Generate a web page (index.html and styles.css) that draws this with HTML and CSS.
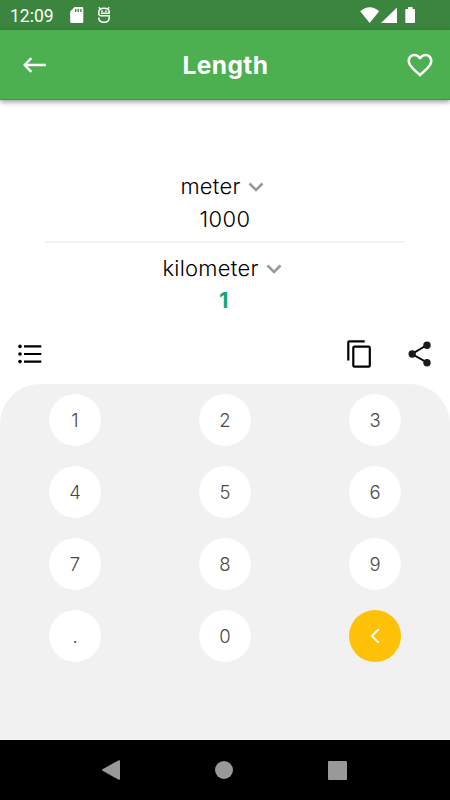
FILE: index.html
```html
<!DOCTYPE html>
<html lang="en">
<head>
<meta charset="utf-8">
<title>Length</title>
<link rel="stylesheet" href="styles.css">
</head>
<body>
<div class="status">
  <span class="time">12:09</span>
  <svg class="sd" width="14" height="16" viewBox="0 0 14 16"><path fill="#fff" fill-rule="evenodd" d="M4.500 0H12Q13.300 0 13.300 1.300V14.700Q13.300 16 12 16H1.500Q.2 16 .2 14.700V4.500ZM5 2V5H6.400V2ZM7.600 2V5H9V2ZM10.200 2V5H11.600V2Z"/></svg>
  <svg class="bug" width="12" height="16" viewBox="0 0 12 16" fill="none" stroke="#fff" stroke-width="1.500"><path d="M.8 .3 2.300 2M11.200 .3 9.700 2M11.200 6.800V5.200Q11.200 1.200 6 1.200T.8 5.200V6.500Q.8 8.800 3 8.800H11.200V11Q11.200 15.200 6 15.200T.8 11V10.500M3 6.300H11"/><path d="M3.200 4.300H4.800M7.200 4.300H8.800"/></svg>
  <svg class="signals" width="56" height="17" viewBox="0 0 56 17" fill="#fff"><path d="M.2 4.200Q9.700-3.600 19.200 4.200L9.700 16ZM37 .5V16H21ZM48 0H52.500V2H54Q55 2 55 3V15Q55 16 54 16H46.300Q45.300 16 45.300 15V3Q45.300 2 46.300 2H48Z"/></svg>
</div>
<header class="bar">
  <svg class="back" width="24" height="16" viewBox="0 0 24 16" fill="none" stroke="#fff" stroke-width="2.400"><path d="M22.800 8H2M8.300 1.200 1.700 8 8.300 14.800"/></svg>
  <h1>Length</h1>
  <svg class="heart" width="30" height="30" viewBox="0 0 24 24" fill="#fff"><path d="M16.500 3c-1.740 0-3.410.81-4.500 2.090C10.910 3.810 9.240 3 7.500 3 4.420 3 2 5.420 2 8.500c0 3.780 3.400 6.860 8.550 11.540L12 21.350l1.450-1.320C18.600 15.360 22 12.280 22 8.500 22 5.420 19.580 3 16.500 3zm-4.400 15.550l-.1.100-.1-.1C7.140 14.240 4 11.390 4 8.500 4 6.500 5.500 5 7.500 5c1.540 0 3.040.99 3.570 2.360h1.870C13.460 5.990 14.960 5 16.500 5c2 0 3.500 1.500 3.500 3.500 0 2.890-3.140 5.740-7.900 10.050z"/></svg>
</header>
<main>
  <div class="unit from"><span>meter</span><svg width="16" height="10" viewBox="0 0 16 10"><path d="M1.500 1.500 8 8 14.500 1.500"/></svg></div>
  <div class="value">1000</div>
  <div class="rule"></div>
  <div class="unit to"><span>kilometer</span><svg width="16" height="10" viewBox="0 0 16 10"><path d="M1.500 1.500 8 8 14.500 1.500"/></svg></div>
  <div class="value result">1</div>
  <div class="actions">
    <svg class="list" width="24" height="20" viewBox="0 0 24 20"><path stroke="#000" stroke-width="2.200" d="M6 2.400H23.300M6 10H23.300M6 17.600H23.300"/><circle cx="2" cy="2.400" r="1.800"/><circle cx="2" cy="10" r="1.800"/><circle cx="2" cy="17.600" r="1.800"/></svg>
    <svg class="copy" width="24" height="28" viewBox="0 0 24 28" fill="none" stroke="#000" stroke-width="2.200"><path d="M17.700 1.300H2.400Q1.300 1.300 1.300 2.400V20.500"/><rect x="6.300" y="6.600" width="16.500" height="20" rx="1.200"/></svg>
    <svg class="share" width="24" height="26" viewBox="0 0 24 26" fill="#1b1b1b"><path d="M19 4 4 13 19 21.500" fill="none" stroke="#000" stroke-width="2"/><circle cx="19" cy="4.200" r="3.700"/><circle cx="4.200" cy="13" r="3.700"/><circle cx="19" cy="21.700" r="3.700"/></svg>
  </div>
</main>
<section class="pad">
  <button>1</button><button>2</button><button>3</button>
  <button>4</button><button>5</button><button>6</button>
  <button>7</button><button>8</button><button>9</button>
  <button>.</button><button>0</button>
  <button class="del"><svg width="10" height="16" viewBox="0 0 10 16"><path d="M8.700 1.200 1.900 8 8.700 14.800" fill="none" stroke="#fff" stroke-width="1.900"/></svg></button>
</section>
<nav class="nav">
  <svg width="18" height="20" viewBox="0 0 18 20"><path d="M16.800.2Q18 0 18 1V19Q18 20 16.800 19.800L.5 10.700Q-.3 10 .5 9.300Z"/></svg>
  <svg width="18" height="18" viewBox="0 0 18 18"><circle cx="9" cy="9" r="9"/></svg>
  <svg width="19" height="19" viewBox="0 0 19 19"><rect width="19" height="19" rx="1"/></svg>
</nav>
</body>
</html>
```

FILE: styles.css
```css
* { box-sizing: border-box; }
body {
  margin: 0;
  width: 450px;
  height: 800px;
  display: flex;
  flex-direction: column;
  overflow: hidden;
  background: #fff;
  color: #000;
  font-family: Inter, sans-serif;
}
svg { display: block; flex: none; }
.status {
  height: 30px;
  display: flex;
  background: #3b853e;
  color: #fff;
}
.time {
  width: 60px;
  padding-left: 10px;
  font: 17.500px/32px Roboto, sans-serif;
}
.sd { margin: 7px 0 0 10px; }
.bug { margin: 7px 0 0 14px; }
.signals { margin: 7px 0 0 250px; }
.bar {
  height: 70px;
  display: grid;
  grid-template-columns: 24px 1fr 30px;
  align-items: center;
  padding: 0 15px 0 23px;
  background: #4caf50;
  border-bottom: 1px solid #3b9d41;
  box-shadow: 0 2px 5px rgba(0, 0, 0, .4);
}
.bar h1 {
  margin: 1px 0 0;
  padding-right: 1px;
  text-align: center;
  color: #fff;
  font-size: 24.500px;
  letter-spacing: .4px;
  line-height: 30px;
  font-weight: 700;
}
main { height: 284px; padding-top: 69px; }
.unit {
  height: 33px;
  display: flex;
  justify-content: center;
  align-items: center;
  gap: 7px;
  font-size: 22px;
  font-weight: 350;
  letter-spacing: .25px;
}
.unit svg { margin-top: 3px; }
.unit path { fill: none; stroke: #999; stroke-width: 2.600; }
.from { padding-right: 6px; }
.to { padding-right: 6px; margin-top: 8px; }
.value {
  height: 33px;
  margin-top: 1px;
  line-height: 33px;
  text-align: center;
  font-size: 22px;
  font-weight: 350;
  letter-spacing: .4px;
}
.rule {
  height: 2px;
  margin: 5px 45px 0;
  background: #f1f1f1;
}
.result {
  height: 32px;
  margin-top: 0;
  padding-right: 2px;
  line-height: 32px;
  color: #15a77a;
  font-weight: 700;
}
.actions { display: flex; height: 60px; align-items: center; padding: 15px 18px 0; }
.copy { margin-left: 305px; }
.share { margin-left: 37px; }
.pad {
  height: 356px;
  display: grid;
  grid-template-columns: repeat(3, 52px);
  grid-auto-rows: 52px;
  gap: 20px 98px;
  padding: 10px 49px;
  background: #f1f1f1;
  border-radius: 40px 40px 0 0;
}
.pad button {
  display: flex;
  align-items: center;
  justify-content: center;
  padding: 0;
  border: 0;
  border-radius: 50%;
  background: #fff;
  color: #484848;
  font: 300 18.500px Inter, sans-serif;
}
.pad .del { background: #ffc107; }
.nav {
  height: 60px;
  display: flex;
  justify-content: space-between;
  align-items: center;
  padding: 0 103px 0 102px;
  background: #000;
  fill: #999;
}
```
